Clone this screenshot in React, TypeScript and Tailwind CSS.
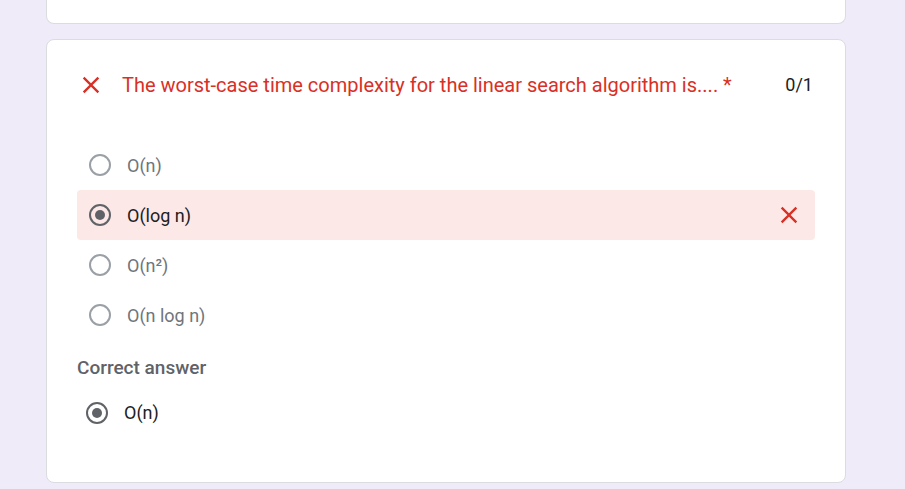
import React from 'react'

const XIcon = ({ className = '' }: { className?: string }) => (
  <svg viewBox="0 0 24 24" className={className} fill="currentColor">
    <path d="M19 6.41L17.59 5 12 10.59 6.41 5 5 6.41 10.59 12 5 17.59 6.41 19 12 13.41 17.59 19 19 17.59 13.41 12z" />
  </svg>
)

function Radio({ checked }: { checked?: boolean }) {
  return (
    <span
      className={`flex h-[22px] w-[22px] shrink-0 items-center justify-center rounded-full border-2 ${
        checked ? 'border-[#5f6368]' : 'border-[#9aa0a6]'
      }`}
    >
      {checked && <span className="h-2.5 w-2.5 rounded-full bg-[#5f6368]" />}
    </span>
  )
}

const options = [
  { label: 'O(n)', checked: false },
  { label: 'O(log n)', checked: true, wrong: true },
  { label: 'O(n²)', checked: false },
  { label: 'O(n log n)', checked: false },
]

export default function App() {
  return (
    <div className="h-[489px] overflow-hidden bg-[#f0ebf8] font-['Roboto',sans-serif]">
      <div className="ml-[46px] flex w-[800px] flex-col gap-[15px]">
        {/* previous card, scrolled off */}
        <div className="h-6 rounded-b-lg border border-t-0 border-[#dadce0] bg-white" />

        {/* question card */}
        <div className="h-[444px] rounded-lg border border-[#dadce0] bg-white px-[30px] pt-[31px]">
          <div className="flex items-center">
            <XIcon className="h-7 w-7 text-[#d93025]" />
            <p className="ml-[17px] flex-1 text-[20px] leading-7 text-[#d93025]">
              The worst-case time complexity for the linear search algorithm is.... *
            </p>
            <span className="mr-[2px] text-[18px] leading-6 text-[#202124]">0/1</span>
          </div>

          <div className="mt-[41px] flex flex-col">
            {options.map((o) => (
              <div
                key={o.label}
                className={`flex h-[50px] items-center rounded pl-[12px] pr-[12px] ${
                  o.wrong ? 'bg-[#fce8e6]' : ''
                }`}
              >
                <Radio checked={o.checked} />
                <span
                  className={`ml-[16px] flex-1 text-[18px] ${
                    o.checked ? 'text-[#202124]' : 'text-[#70757a]'
                  }`}
                >
                  {o.label}
                </span>
                {o.wrong && <XIcon className="h-7 w-7 text-[#d93025]" />}
              </div>
            ))}
          </div>

          <p className="mt-[16px] text-[19px] font-medium leading-6 text-[#5f6368]">Correct answer</p>
          <div className="mt-[19px] flex items-center pl-[9px]">
            <Radio checked />
            <span className="ml-[16px] text-[18px] text-[#202124]">O(n)</span>
          </div>
        </div>
      </div>
    </div>
  )
}
